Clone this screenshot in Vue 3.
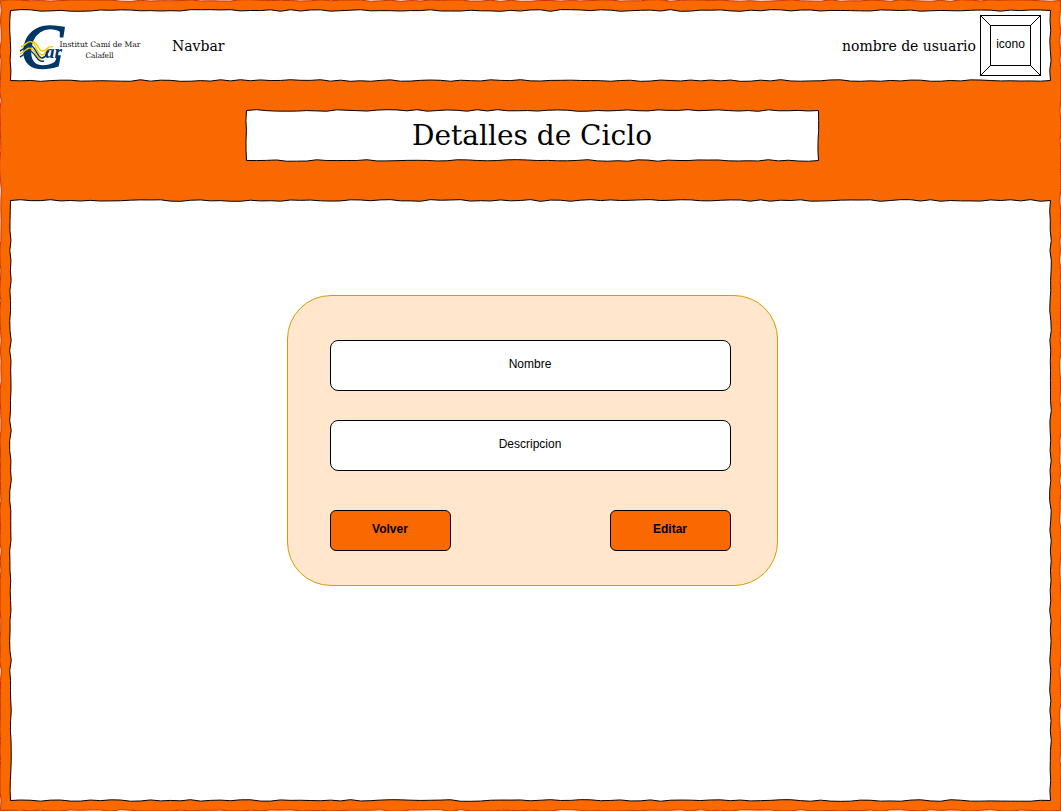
<script setup>
// Hand-drawn rectangle: a vertex about every 10px, nudged across the edge.
function roughRect(w, h, seed) {
  let s = seed
  const rnd = () => {
    s = (s * 16807) % 2147483647
    return s / 2147483647
  }
  const corners = [[0.5, 0.5], [w - 0.5, 0.5], [w - 0.5, h - 0.5], [0.5, h - 0.5]]
  let d = 'M0.5 0.5'
  corners.forEach(([x1, y1], i) => {
    const [x2, y2] = corners[(i + 1) % 4]
    const len = Math.hypot(x2 - x1, y2 - y1)
    const n = Math.round(len / 10)
    const nx = -(y2 - y1) / len
    const ny = (x2 - x1) / len
    for (let k = 1; k < n; k++) {
      const o = (rnd() - 0.5) * 1.7
      const x = x1 + ((x2 - x1) * k) / n + nx * o
      const y = y1 + ((y2 - y1) * k) / n + ny * o
      d += `L${x.toFixed(2)} ${y.toFixed(2)}`
    }
    d += `L${x2} ${y2}`
  })
  return d + 'Z'
}
const frame = roughRect(1061, 811, 71)
const bar = roughRect(1041, 71, 913)
const heading = roughRect(573, 51, 377)
const body = roughRect(1041, 601, 5501)
const fields = ['Nombre', 'Descripcion']
const actions = ['Volver', 'Editar']
</script>

<template>
  <div class="page">
    <svg class="sketch outer"><path :d="frame" /></svg>
    <header class="navbar">
      <svg class="sketch"><path :d="bar" /></svg>
      <svg class="logo" viewBox="0 0 124 52" width="124" height="52">
        <text class="big-c" x="2.5" y="48" textLength="43" lengthAdjust="spacingAndGlyphs">C</text>
        <g class="waves">
          <path class="gold" d="M3 27C8 25 10 20 14 22C19 25 18 34 24 35C28 35 28 31 30 28" />
          <path class="navy" d="M2 31C8 28 10 23 14 26C19 30 19 37 24 38C28 38 28 34 31 31" />
          <path class="gold" d="M2 34C8 31 10 26 14 29C19 33 19 40 25 41" />
          <path class="navy" d="M2 37C8 34 10 29 14 32C19 36 20 43 26 41" />
          <path class="gold" d="M15 22C21 23 20 32 25 31C29 30 30 25 35 27" />
        </g>
        <text class="ar" x="27" y="37.5" textLength="17" lengthAdjust="spacingAndGlyphs">ar</text>
        <text class="school" x="41.5" y="26.5" textLength="81" lengthAdjust="spacingAndGlyphs">Institut Camí de Mar</text>
        <text class="school" x="67.5" y="37.5" textLength="28" lengthAdjust="spacingAndGlyphs">Calafell</text>
      </svg>
      <span class="nav-label">Navbar</span>
      <span class="user">nombre de usuario</span>
      <div class="icon">
        <svg class="sketch" shape-rendering="crispEdges">
          <path d="M.5 .5H60.5V60.5H.5ZM10.5 10.5H50.5V50.5H10.5ZM.5 .5L10.5 10.5M60.5 .5L50.5 10.5M60.5 60.5L50.5 50.5M.5 60.5L10.5 50.5" />
        </svg>
        <span>icono</span>
      </div>
    </header>
    <h1 class="title">
      <svg class="sketch"><path :d="heading" /></svg>
      <span>Detalles de Ciclo</span>
    </h1>
    <main class="content">
      <svg class="sketch"><path :d="body" /></svg>
      <section class="card">
        <div v-for="f in fields" :key="f" class="field">{{ f }}</div>
        <div class="actions">
          <button v-for="a in actions" :key="a" class="btn">{{ a }}</button>
        </div>
      </section>
    </main>
  </div>
</template>

<style>
body { margin: 0; overflow: hidden; }
</style>
<style scoped>
.page { position: relative; box-sizing: border-box; width: 1061px; height: 811px; padding: 10px; display: flex; flex-direction: column; align-items: center; font-family: "Liberation Sans", Arial, sans-serif; color: #000; }
.sketch { position: absolute; left: 0; top: 0; width: 100%; height: 100%; overflow: visible; fill: #fff; stroke: #000; stroke-width: 1; stroke-linejoin: round; }
.outer { fill: #fa6800; stroke: #c73500; }
.navbar { position: relative; width: 1041px; height: 71px; display: flex; align-items: center; box-sizing: border-box; padding: 0 10px 0 8px; font-family: "DejaVu Serif", serif; font-size: 14px; }
.logo { position: relative; flex: none; overflow: visible; }
.big-c { font: italic 64px "Liberation Serif", serif; fill: #003764; stroke: #003764; stroke-width: 1.6; }
.ar { font: italic bold 18px "Liberation Serif", serif; fill: #003764; }
.school { font-family: "DejaVu Serif", serif; font-size: 7.5px; fill: #111; }
.waves { fill: none; stroke-width: 1.4; }
.gold { stroke: #f7c900; }
.navy { stroke: #003764; }
.nav-label { position: relative; margin-left: 30px; }
.user { position: relative; margin-left: auto; margin-right: 4px; }
.icon { position: relative; width: 61px; height: 61px; margin-top: -1px; display: flex; align-items: center; justify-content: center; font: 12px "Liberation Sans", sans-serif; }
.icon span { position: relative; top: -1px; }
.title { position: relative; width: 573px; height: 51px; margin: 29px 0 0 4px; flex: none; display: flex; align-items: center; justify-content: center; font: normal 28px "DejaVu Serif", serif; }
.title span { position: relative; padding-right: 1px; }
.content { position: relative; flex: none; width: 1041px; height: 601px; margin-top: 39px; }
.card { position: relative; box-sizing: border-box; width: 491px; height: 291px; margin: 95px 0 0 277px; padding: 44px 46px 34px 42px; background: #ffe6cc; border: 1px solid #d79b00; border-radius: 44px; }
.field { box-sizing: border-box; width: 401px; height: 51px; margin-bottom: 29px; padding-right: 1px; border: 1px solid #000; border-radius: 8px; background: #fff; font-size: 12px; line-height: 46px; text-align: center; }
.actions { display: flex; justify-content: space-between; width: 401px; margin-top: 39px; }
.btn { box-sizing: border-box; width: 121px; height: 41px; padding: 0 1px 3px 0; border: 1px solid #000; border-radius: 6px; background: #fa6800; color: #000; font: bold 12px "Liberation Sans", sans-serif; }
</style>
